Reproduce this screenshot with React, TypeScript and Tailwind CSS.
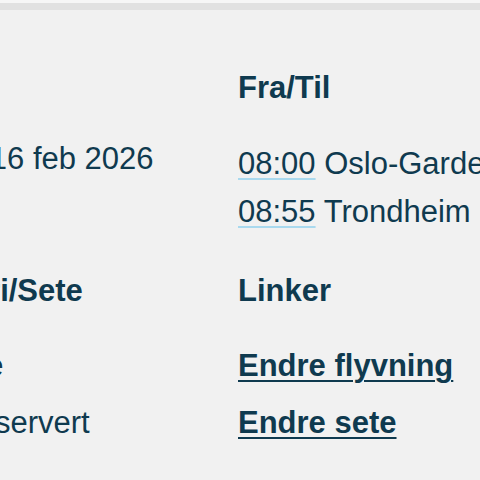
export default function App() {
  return (
    <div className="w-[480px] h-[480px] overflow-hidden bg-[#f1f1f1] text-[#0f3a4f] font-['Liberation_Sans',Arial,sans-serif]">
      <div className="h-[3px] bg-[#f6f6f6]" />
      <div className="h-[7px] bg-[#e1e1e1]" />
      <div className="ml-[-117px] grid grid-cols-[355px_max-content] items-start text-[31px] leading-[48px] whitespace-nowrap pt-[54px]">
        <div className="font-bold">Dato</div>
        <div className="font-bold">Fra/Til</div>

        <div className="mt-[23px]">Utreise 16 feb 2026</div>
        <div className="mt-[28px] flex flex-col">
          <div>
            <span className="underline decoration-[#a9d9ee] decoration-2 underline-offset-[4px]">08:00</span> Oslo-Gardermoen
          </div>
          <div>
            <span className="underline decoration-[#a9d9ee] decoration-2 underline-offset-[4px]">08:55</span> Trondheim
          </div>
        </div>

        <div className="mt-[31px] font-bold">Kategori/Sete</div>
        <div className="mt-[31px] font-bold">Linker</div>

        <div className="mt-[27px] flex flex-col">
          <div>LowFare</div>
          <div className="mt-[9px]">Plass reservert</div>
        </div>
        <div className="mt-[27px] flex flex-col items-start font-bold">
          <a href="#" className="underline decoration-2 underline-offset-[4px]">Endre flyvning</a>
          <a href="#" className="mt-[9px] underline decoration-2 underline-offset-[4px]">Endre sete</a>
        </div>
      </div>
    </div>
  );
}
